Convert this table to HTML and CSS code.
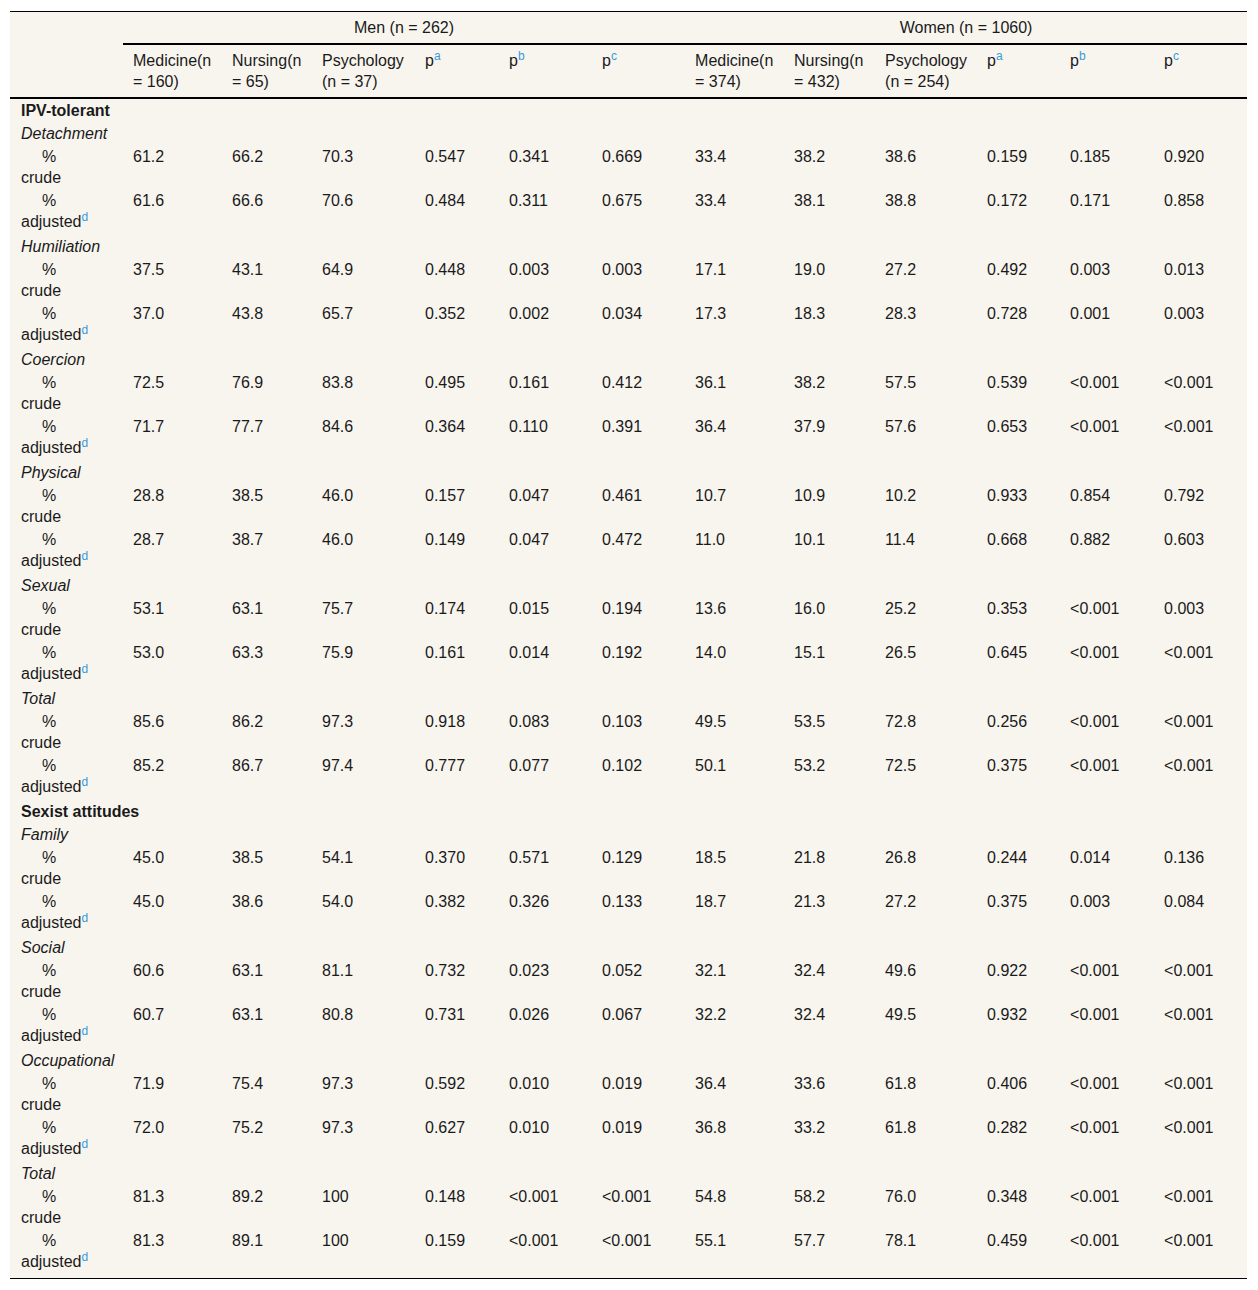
FILE: index.html
```html
<!DOCTYPE html>
<html>
<head>
<meta charset="utf-8">
<link rel="stylesheet" href="styles.css">
</head>
<body>
<div class="wrap">
<table class="tbl">
<colgroup>
<col style="width:113px"><col style="width:99px"><col style="width:90px"><col style="width:103px"><col style="width:84px"><col style="width:93px"><col style="width:93px"><col style="width:99px"><col style="width:91px"><col style="width:102px"><col style="width:83px"><col style="width:94px"><col style="width:93px">
</colgroup>
<thead>
<tr class="h1">
<th rowspan="2" class="blank"></th>
<th colspan="6" class="grp">Men (n = 262)</th>
<th colspan="6" class="grp">Women (n = 1060)</th>
</tr>
<tr class="h2">
<th>Medicine(n = 160)</th><th>Nursing(n = 65)</th><th>Psychology (n = 37)</th><th>p<sup>a</sup></th><th>p<sup>b</sup></th><th>p<sup>c</sup></th>
<th>Medicine(n = 374)</th><th>Nursing(n = 432)</th><th>Psychology (n = 254)</th><th>p<sup>a</sup></th><th>p<sup>b</sup></th><th>p<sup>c</sup></th>
</tr>
</thead>
<tbody>
<tr><td class="sec" colspan="13">IPV-tolerant</td></tr>
<tr><td class="sub" colspan="13">Detachment</td></tr>
<tr><td class="lbl"><span class="pct">%</span><br>crude</td><td>61.2</td><td>66.2</td><td>70.3</td><td>0.547</td><td>0.341</td><td>0.669</td><td>33.4</td><td>38.2</td><td>38.6</td><td>0.159</td><td>0.185</td><td>0.920</td></tr>
<tr class="adj"><td class="lbl"><span class="pct">%</span><br>adjusted<sup>d</sup></td><td>61.6</td><td>66.6</td><td>70.6</td><td>0.484</td><td>0.311</td><td>0.675</td><td>33.4</td><td>38.1</td><td>38.8</td><td>0.172</td><td>0.171</td><td>0.858</td></tr>
<tr><td class="sub" colspan="13">Humiliation</td></tr>
<tr><td class="lbl"><span class="pct">%</span><br>crude</td><td>37.5</td><td>43.1</td><td>64.9</td><td>0.448</td><td>0.003</td><td>0.003</td><td>17.1</td><td>19.0</td><td>27.2</td><td>0.492</td><td>0.003</td><td>0.013</td></tr>
<tr class="adj"><td class="lbl"><span class="pct">%</span><br>adjusted<sup>d</sup></td><td>37.0</td><td>43.8</td><td>65.7</td><td>0.352</td><td>0.002</td><td>0.034</td><td>17.3</td><td>18.3</td><td>28.3</td><td>0.728</td><td>0.001</td><td>0.003</td></tr>
<tr><td class="sub" colspan="13">Coercion</td></tr>
<tr><td class="lbl"><span class="pct">%</span><br>crude</td><td>72.5</td><td>76.9</td><td>83.8</td><td>0.495</td><td>0.161</td><td>0.412</td><td>36.1</td><td>38.2</td><td>57.5</td><td>0.539</td><td>&lt;0.001</td><td>&lt;0.001</td></tr>
<tr class="adj"><td class="lbl"><span class="pct">%</span><br>adjusted<sup>d</sup></td><td>71.7</td><td>77.7</td><td>84.6</td><td>0.364</td><td>0.110</td><td>0.391</td><td>36.4</td><td>37.9</td><td>57.6</td><td>0.653</td><td>&lt;0.001</td><td>&lt;0.001</td></tr>
<tr><td class="sub" colspan="13">Physical</td></tr>
<tr><td class="lbl"><span class="pct">%</span><br>crude</td><td>28.8</td><td>38.5</td><td>46.0</td><td>0.157</td><td>0.047</td><td>0.461</td><td>10.7</td><td>10.9</td><td>10.2</td><td>0.933</td><td>0.854</td><td>0.792</td></tr>
<tr class="adj"><td class="lbl"><span class="pct">%</span><br>adjusted<sup>d</sup></td><td>28.7</td><td>38.7</td><td>46.0</td><td>0.149</td><td>0.047</td><td>0.472</td><td>11.0</td><td>10.1</td><td>11.4</td><td>0.668</td><td>0.882</td><td>0.603</td></tr>
<tr><td class="sub" colspan="13">Sexual</td></tr>
<tr><td class="lbl"><span class="pct">%</span><br>crude</td><td>53.1</td><td>63.1</td><td>75.7</td><td>0.174</td><td>0.015</td><td>0.194</td><td>13.6</td><td>16.0</td><td>25.2</td><td>0.353</td><td>&lt;0.001</td><td>0.003</td></tr>
<tr class="adj"><td class="lbl"><span class="pct">%</span><br>adjusted<sup>d</sup></td><td>53.0</td><td>63.3</td><td>75.9</td><td>0.161</td><td>0.014</td><td>0.192</td><td>14.0</td><td>15.1</td><td>26.5</td><td>0.645</td><td>&lt;0.001</td><td>&lt;0.001</td></tr>
<tr><td class="sub" colspan="13">Total</td></tr>
<tr><td class="lbl"><span class="pct">%</span><br>crude</td><td>85.6</td><td>86.2</td><td>97.3</td><td>0.918</td><td>0.083</td><td>0.103</td><td>49.5</td><td>53.5</td><td>72.8</td><td>0.256</td><td>&lt;0.001</td><td>&lt;0.001</td></tr>
<tr class="adj"><td class="lbl"><span class="pct">%</span><br>adjusted<sup>d</sup></td><td>85.2</td><td>86.7</td><td>97.4</td><td>0.777</td><td>0.077</td><td>0.102</td><td>50.1</td><td>53.2</td><td>72.5</td><td>0.375</td><td>&lt;0.001</td><td>&lt;0.001</td></tr>
<tr><td class="sec" colspan="13">Sexist attitudes</td></tr>
<tr><td class="sub" colspan="13">Family</td></tr>
<tr><td class="lbl"><span class="pct">%</span><br>crude</td><td>45.0</td><td>38.5</td><td>54.1</td><td>0.370</td><td>0.571</td><td>0.129</td><td>18.5</td><td>21.8</td><td>26.8</td><td>0.244</td><td>0.014</td><td>0.136</td></tr>
<tr class="adj"><td class="lbl"><span class="pct">%</span><br>adjusted<sup>d</sup></td><td>45.0</td><td>38.6</td><td>54.0</td><td>0.382</td><td>0.326</td><td>0.133</td><td>18.7</td><td>21.3</td><td>27.2</td><td>0.375</td><td>0.003</td><td>0.084</td></tr>
<tr><td class="sub" colspan="13">Social</td></tr>
<tr><td class="lbl"><span class="pct">%</span><br>crude</td><td>60.6</td><td>63.1</td><td>81.1</td><td>0.732</td><td>0.023</td><td>0.052</td><td>32.1</td><td>32.4</td><td>49.6</td><td>0.922</td><td>&lt;0.001</td><td>&lt;0.001</td></tr>
<tr class="adj"><td class="lbl"><span class="pct">%</span><br>adjusted<sup>d</sup></td><td>60.7</td><td>63.1</td><td>80.8</td><td>0.731</td><td>0.026</td><td>0.067</td><td>32.2</td><td>32.4</td><td>49.5</td><td>0.932</td><td>&lt;0.001</td><td>&lt;0.001</td></tr>
<tr><td class="sub" colspan="13">Occupational</td></tr>
<tr><td class="lbl"><span class="pct">%</span><br>crude</td><td>71.9</td><td>75.4</td><td>97.3</td><td>0.592</td><td>0.010</td><td>0.019</td><td>36.4</td><td>33.6</td><td>61.8</td><td>0.406</td><td>&lt;0.001</td><td>&lt;0.001</td></tr>
<tr class="adj"><td class="lbl"><span class="pct">%</span><br>adjusted<sup>d</sup></td><td>72.0</td><td>75.2</td><td>97.3</td><td>0.627</td><td>0.010</td><td>0.019</td><td>36.8</td><td>33.2</td><td>61.8</td><td>0.282</td><td>&lt;0.001</td><td>&lt;0.001</td></tr>
<tr><td class="sub" colspan="13">Total</td></tr>
<tr><td class="lbl"><span class="pct">%</span><br>crude</td><td>81.3</td><td>89.2</td><td>100</td><td>0.148</td><td>&lt;0.001</td><td>&lt;0.001</td><td>54.8</td><td>58.2</td><td>76.0</td><td>0.348</td><td>&lt;0.001</td><td>&lt;0.001</td></tr>
<tr class="adj last"><td class="lbl"><span class="pct">%</span><br>adjusted<sup>d</sup></td><td>81.3</td><td>89.1</td><td>100</td><td>0.159</td><td>&lt;0.001</td><td>&lt;0.001</td><td>55.1</td><td>57.7</td><td>78.1</td><td>0.459</td><td>&lt;0.001</td><td>&lt;0.001</td></tr>
</tbody>
</table>
</div>
</body>
</html>
```
FILE: styles.css
```css
html, body {
  margin: 0;
  padding: 0;
  background: #ffffff;
}
.wrap {
  padding: 11px 11px 0 10px;
}
.tbl {
  width: 1237px;
  table-layout: fixed;
  border-collapse: collapse;
  background: #f8f5ef;
  font-family: "Liberation Sans", Arial, sans-serif;
  font-size: 16px;
  line-height: 21px;
  color: #1a1a1a;
  border-top: 1px solid #000;
  border-bottom: 1px solid #000;
}
.tbl th {
  font-weight: normal;
  text-align: left;
  vertical-align: top;
  padding: 5px 10px;
}
.tbl th.grp {
  text-align: center;
  border-bottom: 2px solid #000;
}
.tbl tr.h2 th,
.tbl th.blank {
  border-bottom: 2px solid #000;
}
.tbl td {
  padding: 1px 10px;
  vertical-align: top;
  text-align: left;
}
.tbl tr.adj td {
  padding-bottom: 3px;
}
.tbl tr.last td {
  padding-bottom: 6px;
}
.tbl td:first-child {
  padding-left: 11px;
}
.tbl td.sec {
  font-weight: bold;
}
.tbl td.sub {
  font-style: italic;
}
.pct {
  padding-left: 21px;
}
.tbl sup {
  font-size: 12px;
  line-height: 0;
  color: #3a99d8;
}
```
